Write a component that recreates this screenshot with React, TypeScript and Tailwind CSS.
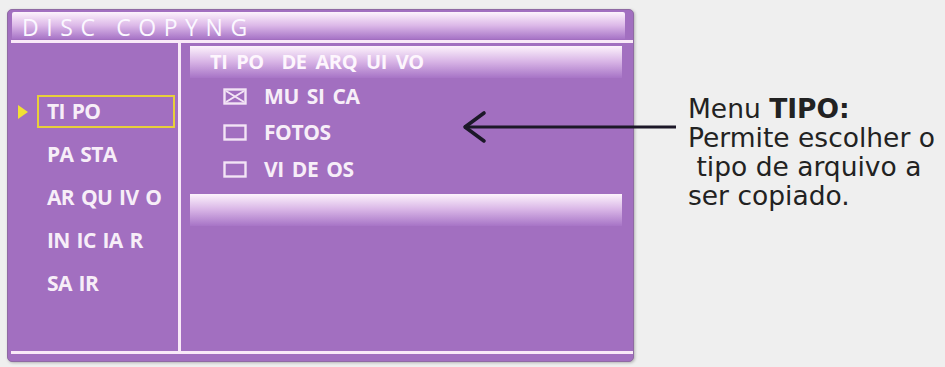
import React from 'react';

const menu = ['TI PO', 'PA STA', 'AR QU IV O', 'IN IC IA R', 'SA IR'];
const options = [
  { label: 'MU SI CA', checked: true },
  { label: 'FOTOS', checked: false },
  { label: 'VI DE OS', checked: false },
];

function Box({ checked }: { checked: boolean }) {
  return (
    <svg width="24" height="17" viewBox="0 0 24 17" className="shrink-0">
      <rect x="1.5" y="1.5" width="21" height="14" fill="none" stroke="#f3e4f5" strokeWidth="2.4" />
      {checked && (
        <path d="M3 3 L21 14 M21 3 L3 14" stroke="#f3e4f5" strokeWidth="2" />
      )}
    </svg>
  );
}

export default function App() {
  return (
    <div
      className="relative flex w-[945px] h-[367px] bg-[#efefef] overflow-hidden"
      style={{ fontFamily: '"Open Sans", sans-serif' }}
    >
      {/* Panel */}
      <div className="ml-[7px] mt-[9px] w-[627px] h-[353px] rounded-[5px] bg-[#a26fc0] border border-[#8f6aa3] flex flex-col pt-[2px] shadow-[1px_1px_3px_rgba(0,0,0,0.25)]">
        <div className="ml-[4px] mr-[8px] h-[27px] rounded-t-[2px] bg-gradient-to-b from-[#fdf3fc] via-[#dcb8e8] to-[#a774c6] flex items-center pl-[10px]">
          <span className="text-[23px] leading-none tracking-[0.33em] text-[#fbf8ff] pt-[3px]">
            DISC COPYNG
          </span>
        </div>
        <div className="ml-[3px] h-[3px] bg-[#f9e9f8] mt-[1px]" />

        {/* Body */}
        <div className="flex h-[308px]">
          <div className="w-[170px] flex flex-col pt-[47px] pl-[10px]">
            {menu.map((m, i) => (
              <div key={m} className="flex items-center h-[43px]">
                <div className="w-[19px] flex items-center">
                  {i === 0 && (
                    <div className="w-0 h-0 border-y-[7px] border-y-transparent border-l-[10px] border-l-[#f2e034]" />
                  )}
                </div>
                <div
                  className={`w-[138px] h-[33px] flex items-center pl-[8px] ${
                    i === 0 ? 'border-2 border-[#e7cf3a]' : 'border-2 border-transparent'
                  }`}
                >
                  <span className="text-[21px] font-bold text-[#f7eef8] tracking-[-0.03em] [word-spacing:2px]">{m}</span>
                </div>
              </div>
            ))}
          </div>
          <div className="w-[3px] bg-[#f9e9f8]" />
          <div className="flex-1 flex flex-col pt-[3px] pl-[9px] pr-[11px]">
            <div className="h-[32px] bg-gradient-to-b from-[#fdf3fc] via-[#d7b3e5] to-[#a774c6] flex items-center pl-[20px]">
              <span className="text-[20px] font-bold text-[#fdf6fd] tracking-[-0.02em] [word-spacing:4px] whitespace-pre">
                TI PO  DE ARQ UI VO
              </span>
            </div>
            <div className="flex flex-col">
              {options.map((o) => (
                <div key={o.label} className="flex items-center h-[36.5px] pl-[33px] gap-[17px]">
                  <Box checked={o.checked} />
                  <span className="text-[21px] font-bold text-[#f7eef8] tracking-[-0.02em] [word-spacing:3px]">{o.label}</span>
                </div>
              ))}
            </div>
            <div className="mt-[6px] h-[32px] bg-gradient-to-b from-[#fdf3fc] via-[#d7b3e5] to-[#a774c6]" />
          </div>
        </div>

        <div className="ml-[3px] h-[3px] bg-[#f9e9f8]" />
      </div>

      {/* Annotation */}
      <div
        className="ml-[54px] mt-[94px] text-[#222] text-[26.5px] leading-[29px]"
        style={{ fontFamily: 'Verdana, "DejaVu Sans", sans-serif' }}
      >
        <div>
          Menu <span className="font-bold">TIPO:</span>
        </div>
        <div>Permite escolher o</div>
        <div className="whitespace-pre"> tipo de arquivo a</div>
        <div>ser copiado.</div>
      </div>

      {/* Arrow */}
      <svg className="absolute left-[460px] top-[110px]" width="220" height="34" viewBox="0 0 220 34">
        <path d="M4 17 L216 17" stroke="#1c1828" strokeWidth="3.2" />
        <path d="M24 3 L5 17 L24 31" fill="none" stroke="#1c1828" strokeWidth="3.6" strokeLinecap="round" strokeLinejoin="round" />
      </svg>
    </div>
  );
}
